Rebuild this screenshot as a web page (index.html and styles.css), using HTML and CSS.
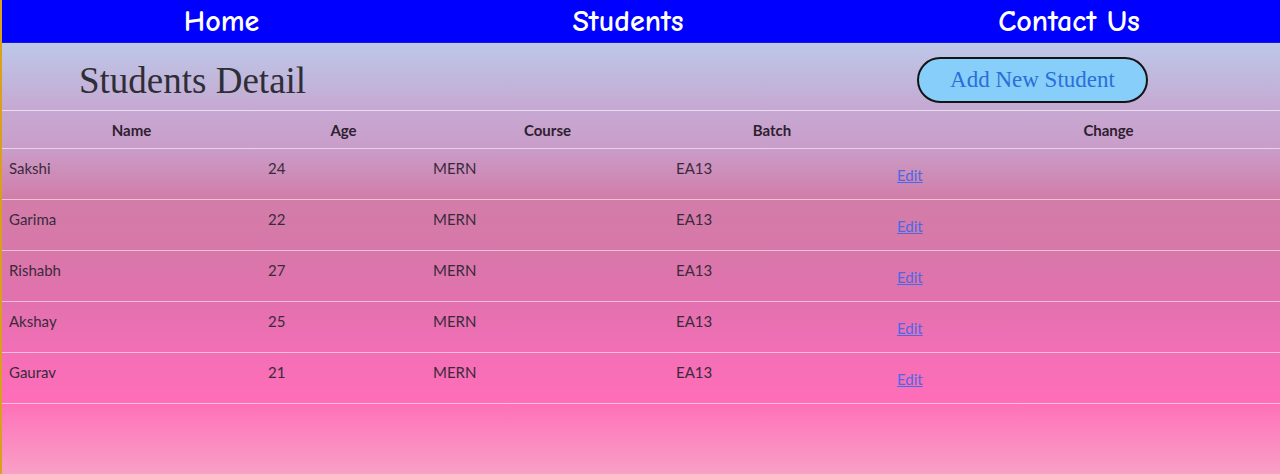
FILE: index.html
```html
<!DOCTYPE html>
<html lang="en">
<head>
<meta charset="utf-8">
<title>Students Detail</title>
<link rel="stylesheet" href="styles.css">
</head>
<body>
<nav class="topnav">
  <a class="nav-link nav-home" href="#">Home</a>
  <a class="nav-link nav-students" href="#">Students</a>
  <a class="nav-link nav-contact" href="#">Contact Us</a>
</nav>
<main class="page">
  <div class="page-head">
    <h1 class="title">Students Detail</h1>
    <button class="add-btn" type="button">Add New Student</button>
  </div>
  <table class="students">
    <colgroup>
      <col class="c-name"><col class="c-age"><col class="c-course"><col class="c-batch"><col class="c-change">
    </colgroup>
    <thead>
      <tr><th>Name</th><th>Age</th><th>Course</th><th>Batch</th><th class="th-change">Change</th></tr>
    </thead>
    <tbody>
      <tr><td>Sakshi</td><td>24</td><td>MERN</td><td>EA13</td><td class="td-edit"><a href="#">Edit</a></td></tr>
      <tr><td>Garima</td><td>22</td><td>MERN</td><td>EA13</td><td class="td-edit"><a href="#">Edit</a></td></tr>
      <tr><td>Rishabh</td><td>27</td><td>MERN</td><td>EA13</td><td class="td-edit"><a href="#">Edit</a></td></tr>
      <tr><td>Akshay</td><td>25</td><td>MERN</td><td>EA13</td><td class="td-edit"><a href="#">Edit</a></td></tr>
      <tr><td>Gaurav</td><td>21</td><td>MERN</td><td>EA13</td><td class="td-edit"><a href="#">Edit</a></td></tr>
    </tbody>
  </table>
</main>
</body>
</html>
```
FILE: styles.css
```css
html, body {
  margin: 0;
  padding: 0;
}
body {
  border-left: 2px solid #d9a01c;
  min-height: 474px;
  box-sizing: border-box;
  font-family: Lato, "Noto Sans", sans-serif;
  background: #f5a0c4;
}
.topnav {
  display: grid;
  grid-template-columns: 1fr 1fr 1fr;
  align-items: center;
  height: 43px;
  background: #0000ff;
  border-bottom: 1px solid #1a1ad0;
  box-sizing: border-box;
  margin-left: -2px;
  padding-left: 2px;
}
.nav-link {
  color: #ffffff;
  text-decoration: none;
  text-align: center;
  font-family: "Comic Sans MS", "Comic Neue", "Open Sans", sans-serif;
  font-weight: bold;
  font-size: 30px;
  line-height: 44px;
}
.nav-home { padding-left: 13px; }
.nav-students { padding-right: 26px; }
.nav-contact { padding-left: 4px; }

.page {
  min-height: 431px;
  background: linear-gradient(180deg,
    #bcc8e8 0px,
    #c6a8d2 67px,
    #c99ec9 105px,
    #d27ca9 156px,
    #d878aa 207px,
    #e271ae 257px,
    #f26fb6 309px,
    #ff6eb8 357px,
    #f8a0c6 431px);
}
.page-head {
  display: flex;
  justify-content: space-between;
  align-items: center;
  height: 67px;
  box-sizing: border-box;
  padding: 7px 132px 0 77px;
}
.title {
  margin: 0;
  font-family: "Liberation Serif", "Times New Roman", serif;
  font-weight: normal;
  font-size: 37px;
  color: #2e2e36;
}
.add-btn {
  width: 231px;
  height: 46px;
  box-sizing: border-box;
  border: 2px solid #141414;
  border-radius: 24px;
  background: #87cefa;
  color: #2a6fd8;
  font-family: "Liberation Serif", "Times New Roman", serif;
  font-size: 23px;
  padding: 0;
}
.students {
  width: 100%;
  border-collapse: collapse;
  table-layout: fixed;
  border-top: 1px solid rgba(255, 255, 255, 0.6);
  color: #3a2a3c;
  font-size: 15px;
}
.c-name { width: 259px; }
.c-age { width: 165px; }
.c-course { width: 243px; }
.c-batch { width: 206px; }
.students tr {
  border-bottom: 1px solid rgba(255, 255, 255, 0.55);
}
.students thead tr {
  height: 38px;
}
.students th {
  font-weight: bold;
  text-align: center;
  padding: 0;
  color: #2e2030;
}
.students th.th-change {
  padding-left: 62px;
}
.students tbody tr {
  height: 51px;
}
.students td {
  vertical-align: top;
  padding: 9px 7px 0;
  line-height: 20px;
}
.students td.td-edit {
  padding-left: 22px;
  padding-top: 16px;
}
.td-edit a {
  color: #4b68e6;
  text-decoration: underline;
}
```
